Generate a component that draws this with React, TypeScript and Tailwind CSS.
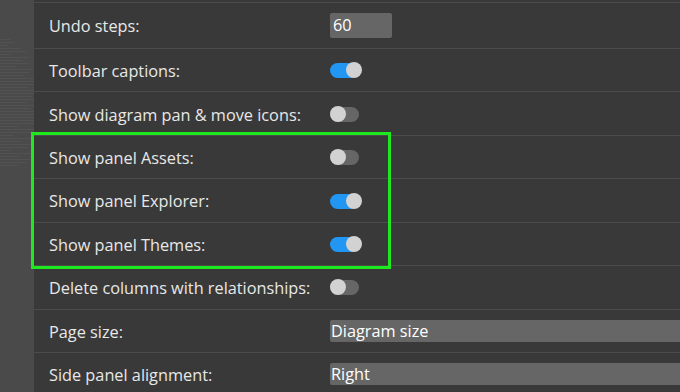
import React from 'react';

type Row =
  | { label: string; kind: 'input'; value: string }
  | { label: string; kind: 'toggle'; on: boolean }
  | { label: string; kind: 'select'; value: string };

const ROWS: Row[] = [
  { label: 'Undo steps:', kind: 'input', value: '60' },
  { label: 'Toolbar captions:', kind: 'toggle', on: true },
  { label: 'Show diagram pan & move icons:', kind: 'toggle', on: false },
  { label: 'Show panel Assets:', kind: 'toggle', on: false },
  { label: 'Show panel Explorer:', kind: 'toggle', on: true },
  { label: 'Show panel Themes:', kind: 'toggle', on: true },
  { label: 'Delete columns with relationships:', kind: 'toggle', on: false },
  { label: 'Page size:', kind: 'select', value: 'Diagram size' },
  { label: 'Side panel alignment:', kind: 'select', value: 'Right' },
];

// faint minimap-ish lines in the left strip
const STRIP_LINES = [
  0, 10, 14, 8, 20, 26, 12, 30, 22, 28, 16, 32, 30, 24, 34, 34, 34, 28, 34, 34, 32, 34, 26, 34, 30,
  34, 34, 34, 34, 34, 18, 34, 34, 14, 34, 22, 34, 28, 12, 34, 20, 30, 26, 18,
];

function Toggle({ on }: { on: boolean }) {
  return (
    <div className="relative w-[32px] h-4">
      <div
        className={`absolute left-0 top-[1px] w-[29px] h-[15px] rounded-full ${
          on ? 'bg-[#2196f3]' : 'bg-[#666666]'
        }`}
      />
      <div
        className={`absolute top-0 w-4 h-4 rounded-full bg-[#d2d2d2] ${on ? 'left-[16px]' : 'left-0'}`}
      />
    </div>
  );
}

function Control({ row }: { row: Row }) {
  if (row.kind === 'input') {
    return (
      <div className="w-[62px] h-[25px] rounded-[2px] bg-[#666666] pl-[3px] flex items-center text-white">
        {row.value}
      </div>
    );
  }
  if (row.kind === 'toggle') return <Toggle on={row.on} />;
  return (
    <div className="w-[360px] h-[22px] rounded-l-[2px] bg-[#666666] pl-[1px] flex items-center text-white">
      {row.value}
    </div>
  );
}

export default function App() {
  return (
    <div
      className="relative w-[680px] h-[392px] overflow-hidden flex bg-[#393939] text-[16.3px] text-[#e8e8e8]"
      style={{ fontFamily: '"Open Sans", "Noto Sans", sans-serif' }}
    >
      {/* Left strip */}
      <div className="w-[34px] shrink-0 bg-[#4a4a4a] pt-[36px] flex flex-col gap-[2px]">
        {STRIP_LINES.map((w, i) => (
          <div key={i} className="h-[1px] bg-[#525252]" style={{ width: w }} />
        ))}
      </div>

      {/* Settings list */}
      <div className="flex-1 pt-[2px] overflow-hidden">
        {ROWS.map((row, i) => (
          <div
            key={row.label}
            className={`flex items-center border-t border-[#4b4b4b] ${i === 0 ? 'h-[46px]' : 'h-[43.45px]'}`}
          >
            <div className="w-[296px] shrink-0 pl-[15px] leading-none pt-[2px]">{row.label}</div>
            <div className="shrink-0">
              <Control row={row} />
            </div>
          </div>
        ))}
      </div>

      {/* Highlight annotation */}
      <div className="absolute left-[31px] top-[132px] w-[360px] h-[137px] border-[3px] border-[#1ee81e] pointer-events-none" />
    </div>
  );
}
